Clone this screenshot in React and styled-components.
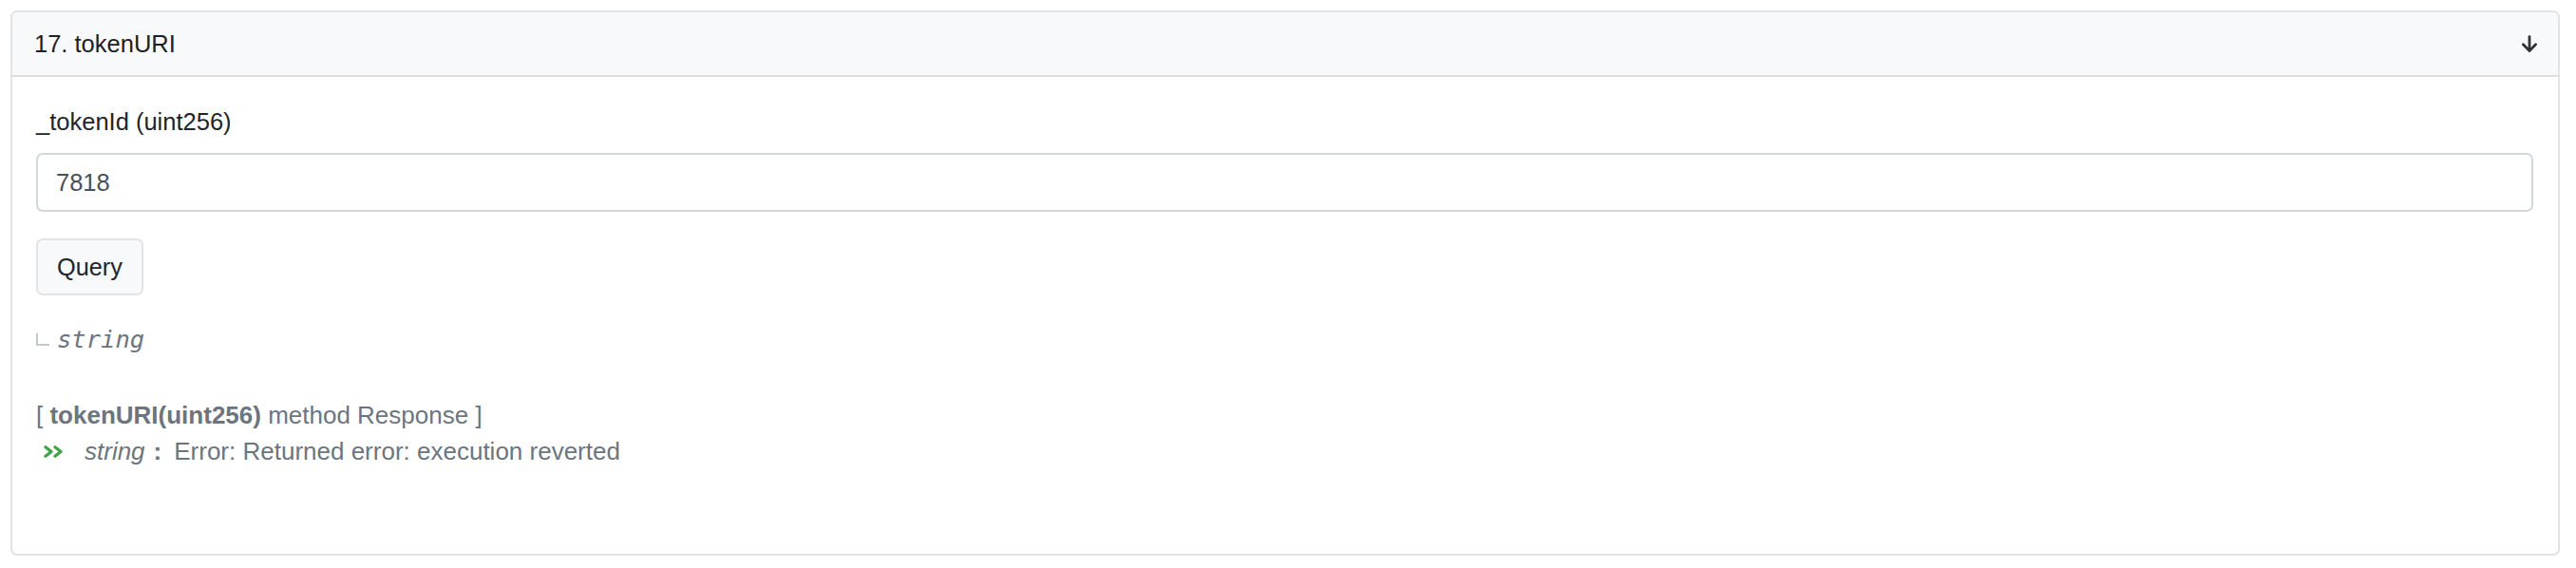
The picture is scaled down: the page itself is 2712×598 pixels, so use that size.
import React from "react";
import styled, { createGlobalStyle } from "styled-components";

const GlobalStyle = createGlobalStyle`
  html, body { margin: 0; padding: 0; background: #ffffff; }
  body { font-family: "Liberation Sans", Arial, Helvetica, sans-serif; }
  * { box-sizing: border-box; }
`;

const Page = styled.div`
  padding: 11px 17px 13px 11px;
`;

const Card = styled.section`
  border: 2px solid #e3e3e3;
  border-radius: 7px;
  overflow: hidden;
  background: #ffffff;
`;

const Header = styled.div`
  display: flex;
  align-items: center;
  justify-content: space-between;
  background: #f8f9fa;
  border-bottom: 2px solid #dfdfdf;
  padding: 14px 21px 14px 23px;
  font-size: 25.5px;
  line-height: 38px;
  color: #1e2125;
`;

const Body = styled.div`
  padding: 28px 26px 89px 25px;
`;

const Label = styled.label`
  display: block;
  font-size: 25.5px;
  line-height: 38px;
  color: #212529;
  margin-bottom: 14px;
`;

const Input = styled.input`
  display: block;
  width: 100%;
  height: 62px;
  border: 2px solid #d3d7db;
  border-radius: 7px;
  padding: 0 19px;
  font-family: "Liberation Sans", Arial, sans-serif;
  font-size: 25.5px;
  color: #495057;
  background: #ffffff;
  outline: none;
`;

const Button = styled.button`
  display: block;
  margin-top: 28px;
  height: 60px;
  padding: 0 20px;
  border: 2px solid #e1e4e7;
  border-radius: 7px;
  background: #f8f9fa;
  font-family: "Liberation Sans", Arial, sans-serif;
  font-size: 25.3px;
  color: #212529;
`;

const TypeRow = styled.div`
  display: flex;
  align-items: center;
  margin-top: 27px;
  line-height: 38px;
`;

const Corner = styled.span`
  display: inline-block;
  width: 14px;
  height: 13px;
  border-left: 2px solid #c3c7cb;
  border-bottom: 2px solid #c3c7cb;
  margin-right: 8px;
`;

const Mono = styled.span`
  font-family: "DejaVu Sans Mono", "Liberation Mono", monospace;
  font-style: italic;
  font-size: 25.5px;
  color: #6c757d;
`;

const Response = styled.div`
  margin-top: 42px;
  font-size: 26px;
  line-height: 38px;
  color: #6c757d;
`;

const Line = styled.div`
  display: flex;
  align-items: center;
  padding-left: ${(p) => (p.$indent ? "8px" : "0")};
  white-space: pre;
`;

const Bold = styled.b`
  font-weight: 700;
`;

const Italic = styled.i`
  font-style: italic;
`;

const Colon = styled.b`
  font-weight: 700;
  margin: 0 13px 0 9px;
`;

const IconWrap = styled.span`
  display: inline-flex;
  margin-right: ${(p) => p.$gap || 0}px;
`;

const ArrowDown = () => (
  <svg width="18" height="18" viewBox="0 0 18 18" fill="none" stroke="#2f3337" strokeWidth="2.8" strokeLinecap="round" strokeLinejoin="round">
    <line x1="9" y1="1.6" x2="9" y2="16.2" />
    <polyline points="2.4,9.8 9,16.4 15.6,9.8" />
  </svg>
);

const DoubleChevron = () => (
  <svg width="21" height="13" viewBox="0 0 21 13" fill="none" stroke="#41a348" strokeWidth="3.3" strokeLinecap="round" strokeLinejoin="round">
    <polyline points="2,1.8 8,6.5 2,11.2" />
    <polyline points="12,1.8 18,6.5 12,11.2" />
  </svg>
);

export default function App() {
  return (
    <>
      <GlobalStyle />
      <Page>
        <Card>
          <Header>
            <span>17. tokenURI</span>
            <ArrowDown />
          </Header>
          <Body>
            <Label>_tokenId (uint256)</Label>
            <Input defaultValue="7818" />
            <Button>Query</Button>
            <TypeRow>
              <Corner />
              <Mono>string</Mono>
            </TypeRow>
            <Response>
              <Line>
                {"[ "}
                <Bold>tokenURI(uint256)</Bold>
                {" method Response ]"}
              </Line>
              <Line $indent>
                <IconWrap $gap={22}>
                  <DoubleChevron />
                </IconWrap>
                <Italic>string</Italic>
                <Colon>:</Colon>
                Error: Returned error: execution reverted
              </Line>
            </Response>
          </Body>
        </Card>
      </Page>
    </>
  );
}
